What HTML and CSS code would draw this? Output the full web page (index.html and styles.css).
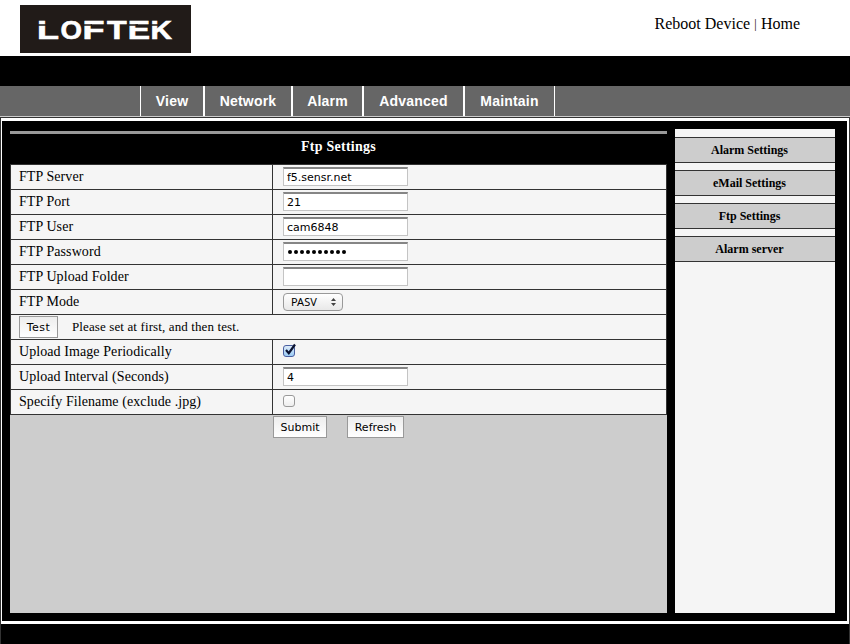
FILE: index.html
```html
<!DOCTYPE html>
<html lang="en">
<head>
<meta charset="utf-8">
<title>Ftp Settings</title>
<link rel="stylesheet" href="styles.css">
</head>
<body>
<header class="top">
  <svg class="logo" viewBox="0 0 171 48" width="171" height="48" role="img" aria-label="LOFTEK">
    <rect width="171" height="48" fill="#211b18"/>
    <g class="wordmark" >
      <text x="17" y="33.5" textLength="22" lengthAdjust="spacingAndGlyphs">L</text><text x="40.6" y="33.5" textLength="21.5" lengthAdjust="spacingAndGlyphs">O</text><text x="62.5" y="33.5" textLength="22" lengthAdjust="spacingAndGlyphs">F</text><text x="87" y="33.5" textLength="19.7" lengthAdjust="spacingAndGlyphs">T</text><text x="107.7" y="33.5" textLength="22.3" lengthAdjust="spacingAndGlyphs">E</text><text x="130.6" y="33.5" textLength="21.5" lengthAdjust="spacingAndGlyphs">K</text>
    </g>
    <g stroke="#211b18" stroke-width="1.4">
      <path d="M17 20h9M63 20h9M109 20h9M131 20h7.5"/>
    </g>
  </svg>
  <div class="links"><a>Reboot Device</a> <span class="bar">|</span> <a>Home</a></div>
</header>
<div class="band"></div>
<nav class="nav">
  <a class="n-view">View</a><a class="n-network">Network</a><a class="n-alarm">Alarm</a><a class="n-advanced">Advanced</a><a class="n-maintain">Maintain</a>
</nav>
<div class="frame">
  <div class="body">
    <main class="main">
      <h1><span>Ftp Settings</span></h1>
      <div class="form">
        <div class="row"><label>FTP Server</label><div class="val"><input type="text" value="f5.sensr.net"></div></div>
        <div class="row"><label>FTP Port</label><div class="val"><input type="text" value="21"></div></div>
        <div class="row"><label>FTP User</label><div class="val"><input type="text" value="cam6848"></div></div>
        <div class="row"><label>FTP Password</label><div class="val"><div class="field dots"><i></i><i></i><i></i><i></i><i></i><i></i><i></i><i></i><i></i><i></i></div></div></div>
        <div class="row"><label>FTP Upload Folder</label><div class="val"><input type="text" value=""></div></div>
        <div class="row"><label>FTP Mode</label><div class="val"><div class="select">PASV<svg width="5" height="8" viewBox="0 0 5 8"><path d="M0 3L2.5 0L5 3zM0 5L2.5 8L5 5z" fill="#444"/></svg></div></div></div>
        <div class="row test"><button>Test</button><span>Please set at first, and then test.</span></div>
        <div class="row"><label>Upload Image Periodically</label><div class="val"><span class="check on"><svg width="14" height="14" viewBox="0 0 14 14"><path d="M3 7L5.8 10.2L12 1.5" fill="none" stroke="#0a1230" stroke-width="2.2"/></svg></span></div></div>
        <div class="row"><label>Upload Interval (Seconds)</label><div class="val"><input type="text" value="4"></div></div>
        <div class="row"><label>Specify Filename (exclude .jpg)</label><div class="val"><span class="check"></span></div></div>
      </div>
      <div class="actions"><button class="submit">Submit</button><button class="refresh">Refresh</button></div>
    </main>
    <aside class="side">
      <a>Alarm Settings</a><a>eMail Settings</a><a>Ftp Settings</a><a>Alarm server</a>
    </aside>
  </div>
</div>
<footer class="foot"></footer>
</body>
</html>
```
FILE: styles.css
```css
* { box-sizing: border-box; }
body { margin: 0; width: 850px; height: 644px; overflow: hidden; background: #fff; color: #000; font-family: "Liberation Serif", serif; display: flex; flex-direction: column; }
.top { height: 56px; flex: none; display: flex; justify-content: space-between; align-items: flex-start; padding: 5px 50px 0 20px; }
.logo { display: block; }
.wordmark { font: bold 26px "Liberation Sans", sans-serif; fill: #fff; stroke: #fff; stroke-width: .6px; }
.links { font-size: 16px; line-height: 18px; margin-top: 10px; white-space: nowrap; }
.bar { font-size: 12px; padding: 0 .2px; position: relative; top: -1px; }
.band { height: 30px; flex: none; background: #000; }
.nav { height: 31px; flex: none; background: #666; border-bottom: 1px solid #ccc; padding-left: 140px; display: flex; }
.nav a { border: solid #fff; border-width: 0 1px; color: #fff; font: bold 14px/30px "Liberation Sans", sans-serif; text-align: center; letter-spacing: .2px; }
.n-view { width: 64px; }
.n-network { width: 88px; }
.n-alarm { width: 71px; }
.n-advanced { width: 101px; }
.n-maintain { width: 91px; }
.frame { height: 507px; flex: none; border: 1px solid #333; border-bottom: 0; padding: 3px 2px 3px 1px; background: #fff; }
.body { height: 500px; background: #000; padding: 8px 12px 8px 8px; display: flex; justify-content: space-between; }
.main { width: 657px; background: #cdcdcd; }
h1 { margin: 0; height: 35px; background: #000; border-top: 2px solid #000; color: #fff; font-size: 14px; line-height: 25px; letter-spacing: .25px; text-align: center; }
h1 span { display: block; border-top: 3px solid #999; }
.form { border: 1px solid #333; border-bottom: 0; background: #f5f5f5; }
.row { height: 25px; border-bottom: 1px solid #333; display: flex; font-size: 14px; line-height: 24px; }
.row label { width: 262px; padding-left: 8px; border-right: 1px solid #333; white-space: nowrap; letter-spacing: .08px; }
.val { padding: 2px 0 0 10px; }
input, .field { display: block; width: 125px; height: 19px; margin: 0; padding: 0 3px; border: 1px solid #c4c4c4; border-top: 2px solid #858585; border-radius: 0; background: #fff; color: #000; font: 11px "DejaVu Sans", sans-serif; }
.dots { display: flex; align-items: center; gap: 2px; padding-left: 4px; }
.dots i { width: 4px; height: 4px; border-radius: 50%; background: #000; }
.select { width: 60px; height: 18px; margin-top: 1px; border: 1px solid #999; border-radius: 4px; background: linear-gradient(#fff, #e8e8e8); font: 11px/16px "Noto Sans", sans-serif; display: flex; justify-content: space-between; align-items: center; padding: 0 6px 0 7px; }
.test { font-size: 13px; line-height: 23px; padding-left: 8px; gap: 14px; letter-spacing: .12px; }
button { border: 1px solid #999; border-radius: 0; background: linear-gradient(#ededed, #fff); color: #000; margin: 0; padding: 0; height: 22px; font: 11px "DejaVu Sans", sans-serif; }
.test button { width: 39px; margin-top: 1px; letter-spacing: .4px; }
.check { display: block; position: relative; width: 12px; height: 12px; margin-top: 3px; border: 1px solid #999; border-radius: 3px; background: linear-gradient(#fff, #eee); }
.on { border-color: #4a5fa0; background: linear-gradient(#dceaf8, #9cccf5); }
.on svg { position: absolute; left: -1px; top: -3px; }
.actions { display: flex; gap: 20px; padding: 1px 0 0 263px; }
.submit { width: 54px; }
.refresh { width: 57px; }
.side { width: 160px; background: #f5f5f5; padding-top: 8px; display: flex; flex-direction: column; gap: 7px; }
.side a { height: 26px; flex: none; border: solid #333; border-width: 1px 0; background: #cdcdcd; font-weight: bold; font-size: 12px; line-height: 24px; text-align: center; padding-right: 11px; }
.foot { flex: 1; background: #000; border: solid #333; border-width: 0 1px; }
```
